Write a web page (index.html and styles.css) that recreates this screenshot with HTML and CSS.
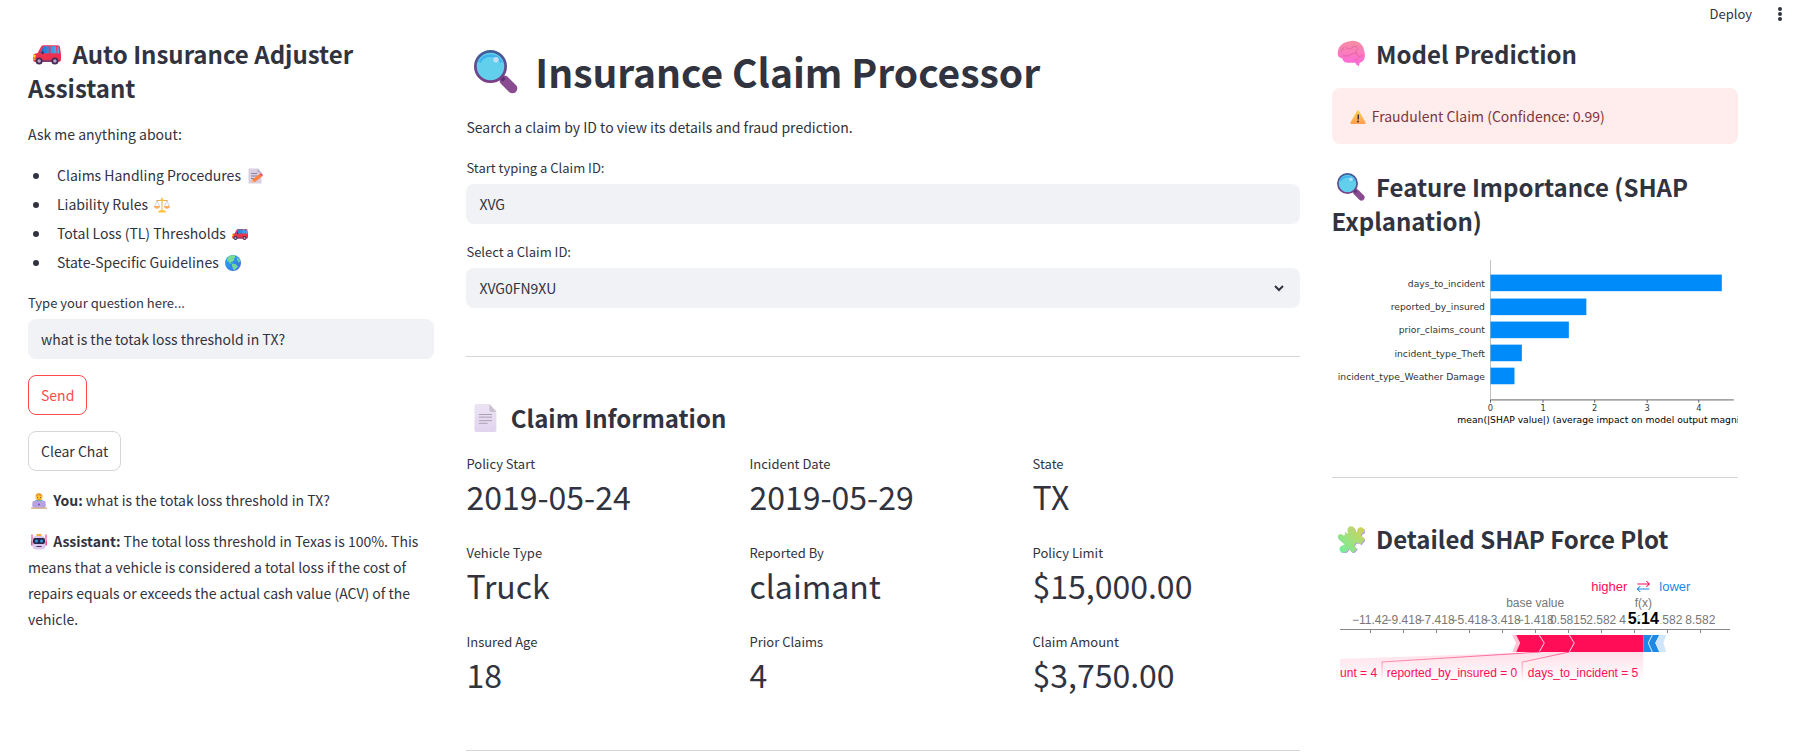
FILE: index.html
```html
<!DOCTYPE html>
<html lang="en">
<head>
<meta charset="utf-8">
<meta name="viewport" content="width=device-width, initial-scale=1">
<title>Insurance Claim Processor</title>
<link rel="stylesheet" href="styles.css">
</head>
<body>
<svg class="sprite" aria-hidden="true">
  <defs>
    <linearGradient id="g-car" x1="0" y1="0" x2="0" y2="1"><stop offset="0" stop-color="#f0365a"/><stop offset="1" stop-color="#e8304a"/></linearGradient>
    <linearGradient id="g-glass" x1="0" y1="0" x2="1" y2="0"><stop offset="0" stop-color="#1c6fd0"/><stop offset="1" stop-color="#49b9f5"/></linearGradient>
    <linearGradient id="g-ring" x1="0" y1="0" x2="0" y2="1"><stop offset="0" stop-color="#3f5f9c"/><stop offset="1" stop-color="#7a3f86"/></linearGradient>
    <linearGradient id="g-brain" x1="0" y1="0" x2="0" y2="1"><stop offset="0" stop-color="#f58fa0"/><stop offset="1" stop-color="#ff66e0"/></linearGradient>
    <linearGradient id="g-puzzle" x1="1" y1="0" x2="0" y2="1"><stop offset="0" stop-color="#d8cf52"/><stop offset="1" stop-color="#6cf0a4"/></linearGradient>
    <linearGradient id="g-globe" x1="0" y1="0" x2="1" y2="1"><stop offset="0" stop-color="#25b0f5"/><stop offset="1" stop-color="#3f66e8"/></linearGradient>
    <linearGradient id="g-warn" x1="0" y1="0" x2="0" y2="1"><stop offset="0" stop-color="#ffd04a"/><stop offset="1" stop-color="#ff9e50"/></linearGradient>
    <linearGradient id="g-page" x1="0" y1="0" x2="0" y2="1"><stop offset="0" stop-color="#ece4f4"/><stop offset="1" stop-color="#e0d4ee"/></linearGradient>
  </defs>
  <symbol id="car" viewBox="0 0 32 32">
    <path d="M13 6h15c2 0 3 1 3 3l1 7v6c0 2-1 3-3 3H3c-2 0-3-1-3-3v-4c0-2 2-3 5-3l4-7c1-2 2-2 4-2z" fill="url(#g-car)"/>
    <path d="M12 7h6v8H8l4-8zM20 7h6l1 8h-7zM28 7h1l1 8h-2z" fill="url(#g-glass)"/>
    <path d="M10 13h2v3h-2z" fill="#44224a"/>
    <path d="M0 16l3 1v3H0z" fill="#ffd23c"/><path d="M0 21h3v2H0z" fill="#f8a04a"/>
    <path d="M3 23h26v2H3z" fill="#7b3c72"/>
    <circle cx="7" cy="24" r="4" fill="#472a55"/><circle cx="7" cy="24" r="2" fill="#b9a4c6"/>
    <circle cx="25" cy="24" r="4" fill="#472a55"/><circle cx="25" cy="24" r="2" fill="#b9a4c6"/>
  </symbol>
  <symbol id="search" viewBox="0 0 32 32">
    <path d="M22 22l6 6" stroke="#8a4c90" stroke-width="7" stroke-linecap="round"/>
    <path d="M20 20l2 2" stroke="#5e2f72" stroke-width="3"/>
    <circle cx="12" cy="12" r="11" fill="#62d0ec" stroke="url(#g-ring)" stroke-width="2"/>
    <path d="M4 9a9 9 0 0 1 16 0" fill="none" stroke="#3fb3ee" stroke-width="2"/>
    <circle cx="16" cy="7" r="2" fill="#c3dcf7"/>
  </symbol>
  <symbol id="memo" viewBox="0 0 32 32">
    <path d="M3 1h18l8 8v22H3z" fill="#d8cfe2"/><path d="M21 1v8h8z" fill="#b9adc4"/>
    <path d="M8 11h12M8 16h13M8 21h7" stroke="#8f849c" stroke-width="2"/>
    <path d="M9 29l2-6 14-11 5 5-14 11z" fill="#ff8142"/><path d="M25 12l3-2 4 4-2 3z" fill="#ef4360"/><path d="M9 29l2-5 4 4z" fill="#ffc190"/>
  </symbol>
  <symbol id="scales" viewBox="0 0 32 32">
    <path d="M16 1v27M5 7h22" stroke="#e9b04a" stroke-width="2" fill="none"/>
    <path d="M6 7L2 18M6 7l5 11M26 7l-5 11M26 7l4 11" stroke="#a99fb2" fill="none"/>
    <circle cx="16" cy="6" r="3" fill="#ffc548"/>
    <path d="M0 18h12c0 7-12 7-12 0zM20 18h12c0 7-12 7-12 0z" fill="#ffad5c"/>
    <path d="M8 31c0-4 5-5 8-5s8 1 8 5z" fill="#ffc23d"/>
  </symbol>
  <symbol id="globe" viewBox="0 0 32 32">
    <circle cx="16" cy="16" r="16" fill="url(#g-globe)"/>
    <path d="M8 3c4-2 7-3 11-2l2 4-4 2 2 3-5 4-3 0 2 4-3-1-3-4-3-2c0-3 2-6 4-8z" fill="#79dc92"/>
    <path d="M14 17l7 1 5 5c-1 3-5 4-7 8-4-2-3-6-5-9z" fill="#6fd79c"/>
    <path d="M24 4c4 3 6 6 7 10l-4 1-3-5z" fill="#64cf9a"/>
  </symbol>
  <symbol id="technologist" viewBox="0 0 32 32">
    <path d="M3 26c0-9 3-12 13-12s13 3 13 12z" fill="#4e9be6"/>
    <circle cx="16" cy="8" r="7" fill="#ffc43a"/><path d="M9 7c0-9 14-9 14 0-5-1-9-4-14 0z" fill="#e89a2c"/>
    <circle cx="13" cy="9" r="1" fill="#5a3440"/><circle cx="19" cy="9" r="1" fill="#5a3440"/>
    <path d="M13 12c2 2 4 2 6 0" stroke="#b4483c" fill="none"/>
    <rect x="3" y="16" width="26" height="14" rx="2" fill="#b9a2e2"/><path d="M0 29h32v3H0z" fill="#d9b98b"/>
    <circle cx="16" cy="23" r="2" fill="#6f56a6"/>
  </symbol>
  <symbol id="robot" viewBox="0 0 32 32">
    <path d="M2 2v15M30 2v15" stroke="#f06aa8" stroke-width="3" stroke-linecap="round"/>
    <path d="M0 14h32v9H0z" fill="#f2508e"/><path d="M11 0h10v5H11z" fill="#f6a83c"/>
    <rect x="3" y="4" width="26" height="27" rx="8" fill="#d9c9ee"/>
    <rect x="4" y="8" width="24" height="12" rx="4" fill="#2c2545"/>
    <circle cx="11" cy="14" r="3" fill="#2e9de8"/><circle cx="21" cy="14" r="3" fill="#2e9de8"/>
    <path d="M11 24h10v2H11z" fill="#49325f"/>
  </symbol>
  <symbol id="page" viewBox="0 0 32 32">
    <path d="M4 2c0-1 1-2 2-2h15l8 8v22c0 1-1 2-2 2H6c-1 0-2-1-2-2z" fill="url(#g-page)"/>
    <path d="M21 0v7c0 1 1 2 2 2h6z" fill="#c9c0d0"/>
    <path d="M9 12h15M9 15h15M9 19h15M9 22h10" stroke="#a297aa" stroke-width="1"/>
  </symbol>
  <symbol id="brain" viewBox="0 0 32 32">
    <path d="M16 1c8-1 14 4 15 11 2 6 1 13-5 14l-1 4-3-2-1-2h-9c-3 0-5-2-6-5-4-1-6-3-5-7C1 7 7 2 16 1z" fill="url(#g-brain)"/>
    <path d="M7 18c3 0 5 1 8-1s4-2 7-2M10 8c2 3 5 3 7 1s4-2 6-1M22 15c1 4 4 4 7 3M22 15c-1-2 0-4 2-5M25 19c0 2-2 4-5 4M4 13c2-1 3-2 3-4" fill="none" stroke="#e2609c" stroke-width="1" stroke-linecap="round"/>
  </symbol>
  <symbol id="warning" viewBox="0 0 32 32">
    <path d="M14 4c1-2 3-2 4 0l13 23c1 1 0 3-2 3H3c-2 0-3-2-2-3z" fill="url(#g-warn)"/>
    <path d="M15 11h3v10h-3z" fill="#403040"/><circle cx="16" cy="25" r="2" fill="#403040"/>
  </symbol>
  <symbol id="puzzle" viewBox="0 0 32 32">
    <path d="M8 7l4 3c1-1 0-2 0-4 0-5 6-6 8-2 1 2 0 3 1 4h2c0-5 3-6 6-5 3 2 3 6-1 7l-1 2 5 4-5 6c-2-1-3-3-6-1-3 3 0 5 2 6l-5 5-5-5c-1 3-4 6-8 4-4-3-2-7 2-8l2-1-6-5c-2-1-3-5-1-6 3-2 4 1 6 1 2-1 2-3 0-5z" fill="#b99ae0" transform="translate(1 1)"/>
    <path d="M8 7l4 3c1-1 0-2 0-4 0-5 6-6 8-2 1 2 0 3 1 4h2c0-5 3-6 6-5 3 2 3 6-1 7l-1 2 5 4-5 6c-2-1-3-3-6-1-3 3 0 5 2 6l-5 5-5-5c-1 3-4 6-8 4-4-3-2-7 2-8l2-1-6-5c-2-1-3-5-1-6 3-2 4 1 6 1 2-1 2-3 0-5z" fill="url(#g-puzzle)"/>
  </symbol>
</svg>

<header class="toolbar">
  <button class="toolbar-button" type="button">Deploy</button>
  <button class="toolbar-button" type="button" aria-label="Main menu">
    <svg class="dots" viewBox="0 0 4 14"><circle cx="2" cy="2" r="2"/><circle cx="2" cy="7" r="2"/><circle cx="2" cy="12" r="2"/></svg>
  </button>
</header>

<main class="columns">
  <section class="column">
    <h2><svg class="emoji"><use href="#car"/></svg> Auto Insurance Adjuster Assistant</h2>
    <p class="intro">Ask me anything about:</p>
    <ul class="topics">
      <li>Claims Handling Procedures <svg class="emoji"><use href="#memo"/></svg></li>
      <li>Liability Rules <svg class="emoji"><use href="#scales"/></svg></li>
      <li>Total Loss (TL) Thresholds <svg class="emoji"><use href="#car"/></svg></li>
      <li>State-Specific Guidelines <svg class="emoji"><use href="#globe"/></svg></li>
    </ul>
    <div class="field">
      <label for="question">Type your question here...</label>
      <input id="question" type="text" value="what is the totak loss threshold in TX?">
    </div>
    <div class="actions">
      <button class="button button-active" type="button">Send</button>
      <button class="button" type="button">Clear Chat</button>
    </div>
    <div class="chat">
      <p><svg class="emoji"><use href="#technologist"/></svg> <strong>You:</strong> what is the totak loss threshold in TX?</p>
      <p><svg class="emoji"><use href="#robot"/></svg> <strong>Assistant:</strong> The total loss threshold in Texas is 100%. This means that a vehicle is considered a total loss if the cost of repairs equals or exceeds the actual cash value (ACV) of the vehicle.</p>
    </div>
  </section>

  <section class="column">
    <h1><svg class="emoji"><use href="#search"/></svg> Insurance Claim Processor</h1>
    <p>Search a claim by ID to view its details and fraud prediction.</p>
    <div class="field">
      <label for="claim-search">Start typing a Claim ID:</label>
      <input id="claim-search" type="text" value="XVG">
    </div>
    <div class="field">
      <label for="claim-select">Select a Claim ID:</label>
      <div class="select">
        <select id="claim-select"><option>XVG0FN9XU</option></select>
        <svg class="chevron" viewBox="0 0 12 8"><path d="M2 2l4 4 4-4"/></svg>
      </div>
    </div>
    <hr>
    <h2 class="section-title"><svg class="emoji"><use href="#page"/></svg> Claim Information</h2>
    <dl class="metrics">
      <div><dt>Policy Start</dt><dd>2019-05-24</dd></div>
      <div><dt>Incident Date</dt><dd>2019-05-29</dd></div>
      <div><dt>State</dt><dd>TX</dd></div>
      <div><dt>Vehicle Type</dt><dd>Truck</dd></div>
      <div><dt>Reported By</dt><dd>claimant</dd></div>
      <div><dt>Policy Limit</dt><dd>$15,000.00</dd></div>
      <div><dt>Insured Age</dt><dd>18</dd></div>
      <div><dt>Prior Claims</dt><dd>4</dd></div>
      <div><dt>Claim Amount</dt><dd>$3,750.00</dd></div>
    </dl>
    <hr>
  </section>

  <section class="column">
    <h2><svg class="emoji"><use href="#brain"/></svg> Model Prediction</h2>
    <div class="alert" role="alert"><svg class="emoji"><use href="#warning"/></svg> Fraudulent Claim (Confidence: 0.99)</div>
    <h2 class="importance-title"><svg class="emoji"><use href="#search"/></svg> Feature Importance (SHAP Explanation)</h2>
    <svg class="chart importance" viewBox="0 0 441 186" role="img" aria-label="Mean SHAP value by feature">
      <path d="M172 2v152" stroke="#bbb"/>
      <g fill="#008bfb">
        <rect x="172" y="18" width="251" height="18"/>
        <rect x="172" y="44" width="104" height="18"/>
        <rect x="172" y="69" width="85" height="18"/>
        <rect x="172" y="94" width="34" height="18"/>
        <rect x="172" y="119" width="26" height="18"/>
      </g>
      <g class="feature-names">
        <text x="166" y="31">days_to_incident</text>
        <text x="166" y="56">reported_by_insured</text>
        <text x="166" y="81">prior_claims_count</text>
        <text x="166" y="107">incident_type_Theft</text>
        <text x="166" y="132">incident_type_Weather Damage</text>
      </g>
      <path d="M172 154h264M172 154v3M229 154v3M285 154v3M342 154v3M398 154v3" stroke="#555" fill="none"/>
      <g class="ticks">
        <text x="172" y="166">0</text><text x="229" y="166">1</text><text x="285" y="166">2</text><text x="342" y="166">3</text><text x="398" y="166">4</text>
      </g>
      <text class="axis-title" x="136" y="179">mean(|SHAP value|) (average impact on model output magnitude)</text>
    </svg>
    <hr>
    <h2 class="section-title"><svg class="emoji"><use href="#puzzle"/></svg> Detailed SHAP Force Plot</h2>
    <div class="force">
      <svg class="chart" viewBox="0 0 390 116" role="img" aria-label="SHAP force plot">
        <defs>
          <linearGradient id="fade" gradientUnits="userSpaceOnUse" x1="0" y1="82" x2="0" y2="112"><stop offset="0" stop-color="#ff0d57" stop-opacity=".13"/><stop offset="1" stop-color="#ff0d57" stop-opacity="0"/></linearGradient>
          <linearGradient id="fade-line" gradientUnits="userSpaceOnUse" x1="0" y1="82" x2="0" y2="112"><stop offset="0" stop-color="#ff0d57" stop-opacity=".6"/><stop offset="1" stop-color="#ff0d57" stop-opacity="0"/></linearGradient>
        </defs>
        <g class="legend">
          <text x="251" y="21" fill="#ff0d57">higher</text>
          <text x="319" y="21" fill="#1e88e5">lower</text>
        </g>
        <path d="M297 14h12M306 11l3 3-3 3" fill="none" stroke="#ff0d57"/>
        <path d="M309 19h-12M300 16l-3 3 3 3" fill="none" stroke="#1e88e5"/>
        <g class="force-labels">
          <text x="195" y="37">base value</text><text x="303" y="37">f(x)</text>
          <text x="30" y="54">−11.42</text><text x="63" y="54">−9.418</text><text x="96" y="54">−7.418</text><text x="129" y="54">−5.418</text><text x="162" y="54">−3.418</text><text x="195" y="54">−1.418</text><text x="228" y="54">0.5815</text><text x="261" y="54">2.582</text><text x="294" y="54">4.582</text><text x="327" y="54">6.582</text><text x="360" y="54">8.582</text>
        </g>
        <path class="crisp" d="M0 59h390M30 59v4M63 59v4M96 59v4M129 59v4M162 59v4M195 59v4M228 59v4M261 59v4M294 59v4M327 59v4M360 59v4" stroke="#888" fill="none"/>
        <text class="output" x="303" y="54">5.14</text>
        <path d="M303 56v9" stroke="#fff" stroke-opacity=".6"/>
        <path d="M0 89L200 82H303V112H0z" fill="url(#fade)"/>
        <path d="M172 65h4l4 8-4 9h-4l4-9z" fill="#ffc3d5"/>
        <path d="M176 65h127v17H176l4-9z" fill="#ff0d57"/>
        <path d="M199 65l5 8-5 9M229 65l5 8-5 9" fill="none" stroke="#ffc3d5"/>
        <path d="M303 65h16l-4 8 4 9h-16z" fill="#1e88e5"/>
        <path d="M312 65l-4 8 4 9" fill="none" stroke="#d1e6fa"/>
        <path d="M319 65h7l-3 8 3 9h-7l-4-9z" fill="#d1e6fa"/>
        <path d="M200 82L42 92v20M229 82L182 92v20" fill="none" stroke="url(#fade-line)"/>
        <g class="effects">
          <text x="37" y="107">prior_claims_count = 4</text>
          <text x="177" y="107">reported_by_insured = 0</text>
          <text x="298" y="107">days_to_incident = 5</text>
        </g>
      </svg>
    </div>
  </section>
</main>
</body>
</html>
```
FILE: styles.css
```css
* { box-sizing: border-box; }

body {
  margin: 0;
  background: #fff;
  color: #31333f;
  font-family: "Noto Sans CJK SC", "Noto Sans", sans-serif;
  font-size: 14px;
  line-height: 26px;
}

h1, h2, p, ul, dl, dd { margin: 0; padding: 0; }

button, input, select { font: inherit; color: inherit; }

.sprite { position: absolute; width: 0; height: 0; }

.toolbar {
  position: absolute;
  top: 0;
  right: 0;
  display: flex;
  align-items: center;
  gap: 26px;
  height: 28px;
  padding-right: 18px;
}

.toolbar-button {
  display: flex;
  padding: 0;
  border: 0;
  background: none;
  font-size: 13px;
}

.dots { width: 4px; height: 14px; fill: #31333f; }

.columns {
  display: grid;
  grid-template-columns: minmax(0, 1fr) minmax(0, 2.05fr) minmax(0, 1fr);
  gap: 32px;
  padding: 37px 62px 0 28px;
}

h1 { padding: 4px 0 13px; font-size: 39px; font-weight: 700; line-height: 60px; }

h2 { font-size: 24px; font-weight: 600; line-height: 34px; }

.emoji {
  width: 16px;
  height: 16px;
  margin: 0 3px;
  vertical-align: -3px;
}

h2 .emoji { width: 28px; height: 28px; margin: 0 6px 0 5px; vertical-align: -4px; }

h1 .emoji { width: 44px; height: 44px; margin: 0 8px; vertical-align: -6px; }

.intro { margin-top: 16px; }

.topics {
  display: grid;
  gap: 3px;
  margin-top: 15px;
  padding-left: 29px;
  list-style: none;
}

.topics li::before {
  content: "";
  display: inline-block;
  width: 6px;
  height: 6px;
  margin: 0 18px 0 -24px;
  border-radius: 50%;
  background: currentColor;
  vertical-align: 2px;
}

.field { display: grid; gap: 4px; margin-top: 16px; }

.field label { font-size: 13px; line-height: 24px; }

.field input, .select select {
  width: 100%;
  height: 40px;
  padding: 0 13px;
  border: 0;
  border-radius: 8px;
  background: #f0f2f6;
}

.select { position: relative; }

.select select { display: block; appearance: none; }

.chevron {
  position: absolute;
  top: 16px;
  right: 15px;
  width: 12px;
  height: 8px;
  fill: none;
  stroke: #31333f;
  stroke-width: 2;
  pointer-events: none;
}

.actions {
  display: flex;
  flex-direction: column;
  align-items: flex-start;
  gap: 16px;
  margin-top: 16px;
}

.button {
  height: 40px;
  padding: 0 12px;
  border: 1px solid #d6d6d9;
  border-radius: 8px;
  background: #fff;
}

.button-active { border-color: #ff4b4b; color: #ff4b4b; }

.chat { display: grid; gap: 15px; margin-top: 16px; }

hr { width: 100%; margin: 48px 0 44px; border: 0; border-top: 1px solid #d6d6d9; }

hr:last-child { margin-bottom: 0; }

.section-title { margin-bottom: 14px; }

.metrics {
  display: grid;
  grid-template-columns: repeat(3, minmax(0, 1fr));
  gap: 25px 16px;
  padding: 5px 0 6px;
}

.metrics dt { font-size: 13px; line-height: 20px; }

.metrics dd { font-size: 32px; line-height: 44px; }

.alert {
  margin-top: 17px;
  padding: 15px;
  border-radius: 8px;
  background: #ffecec;
  color: #7d353b;
}

.importance-title { margin-top: 26px; }

.chart { display: block; width: 100%; overflow: hidden; }

.importance { margin-top: 20px; }

.importance text { font-family: "DejaVu Sans", sans-serif; font-size: 10px; }

.feature-names text { fill: #333; text-anchor: end; }

.importance .ticks text { fill: #333; font-size: 9px; text-anchor: middle; }

.importance .axis-title { fill: #000; }

.crisp { shape-rendering: crispEdges; }

.force { padding: 0 8px; }

.force text { font-family: "Liberation Sans", Arial, sans-serif; font-size: 12px; }

.force .legend text { font-size: 13px; }

.force-labels text { fill: #777; text-anchor: middle; }

.force .output {
  fill: #000;
  stroke: #fff;
  stroke-width: 4;
  paint-order: stroke;
  font-size: 16px;
  font-weight: 700;
  text-anchor: middle;
}

.effects text { fill: #ff0d57; text-anchor: end; }
```
